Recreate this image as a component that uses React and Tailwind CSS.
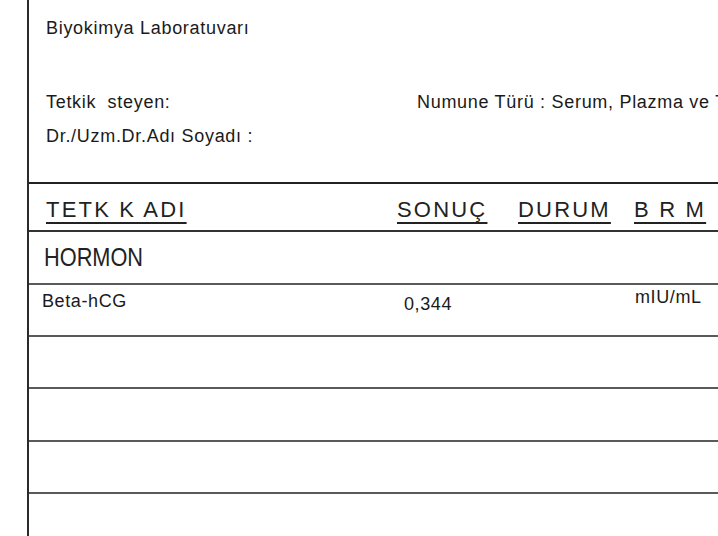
export default function App() {
  const font = { fontFamily: '"Liberation Sans", Arial, sans-serif' };
  return (
    <div
      className="w-[718px] h-[536px] bg-white overflow-hidden flex text-[#1a1a1a]"
      style={font}
    >
      <div className="w-[27px] shrink-0" />
      <div className="flex-1 min-w-0 border-l-2 border-[#2a2a2a] flex flex-col">
        {/* Info section */}
        <div className="h-[184px] shrink-0 border-b-2 border-[#222] pl-[17px] flex flex-col text-[18px] leading-[20px] tracking-[0.7px] whitespace-nowrap">
          <div className="mt-[18px]">Biyokimya Laboratuvarı</div>
          <div className="mt-[54px] flex">
            <div className="w-[371px] shrink-0 whitespace-pre">Tetkik  steyen:</div>
            <div className="whitespace-pre">Numune Türü : Serum, Plazma ve Tam Kan</div>
          </div>
          <div className="mt-[14px]">Dr./Uzm.Dr.Adı Soyadı :</div>
        </div>

        {/* Header row */}
        <div className="h-[48px] shrink-0 border-b-2 border-[#333] pl-[17px] grid grid-cols-[351px_121px_116px_1fr] items-start text-[22px] leading-[26px] tracking-[2.2px] text-[#222] whitespace-nowrap">
          <div className="pt-[13px]">
            <span className="underline decoration-2 underline-offset-[5px] whitespace-pre">TETK K ADI</span>
          </div>
          <div className="pt-[13px]">
            <span className="underline decoration-2 underline-offset-[5px]">SONUÇ</span>
          </div>
          <div className="pt-[13px]">
            <span className="underline decoration-2 underline-offset-[5px]">DURUM</span>
          </div>
          <div className="pt-[13px]">
            <span className="underline decoration-2 underline-offset-[5px] whitespace-pre">B R M</span>
          </div>
        </div>

        {/* HORMON row */}
        <div className="h-[53px] shrink-0 border-b-2 border-[#5a5a5a] pl-[15px] flex items-center">
          <span className="inline-block origin-left scale-x-[0.87] text-[25px] leading-[30px] text-[#222] mt-[-1px]">
            HORMON
          </span>
        </div>

        {/* Beta-hCG row */}
        <div className="h-[52px] shrink-0 border-b-2 border-[#5a5a5a] pl-[13px] grid grid-cols-[355px_121px_116px_1fr] items-start text-[18px] leading-[20px] tracking-[0.6px] whitespace-nowrap">
          <div className="pt-[6px]">Beta-hCG</div>
          <div className="pt-[9px] pl-[7px]">0,344</div>
          <div />
          <div className="pt-[2px] pl-[1px]">mIU/mL</div>
        </div>

        <div className="h-[52px] shrink-0 border-b-2 border-[#5a5a5a]" />
        <div className="h-[53px] shrink-0 border-b-2 border-[#5a5a5a]" />
        <div className="h-[52px] shrink-0 border-b-2 border-[#5a5a5a]" />
        <div className="flex-1" />
      </div>
    </div>
  );
}
